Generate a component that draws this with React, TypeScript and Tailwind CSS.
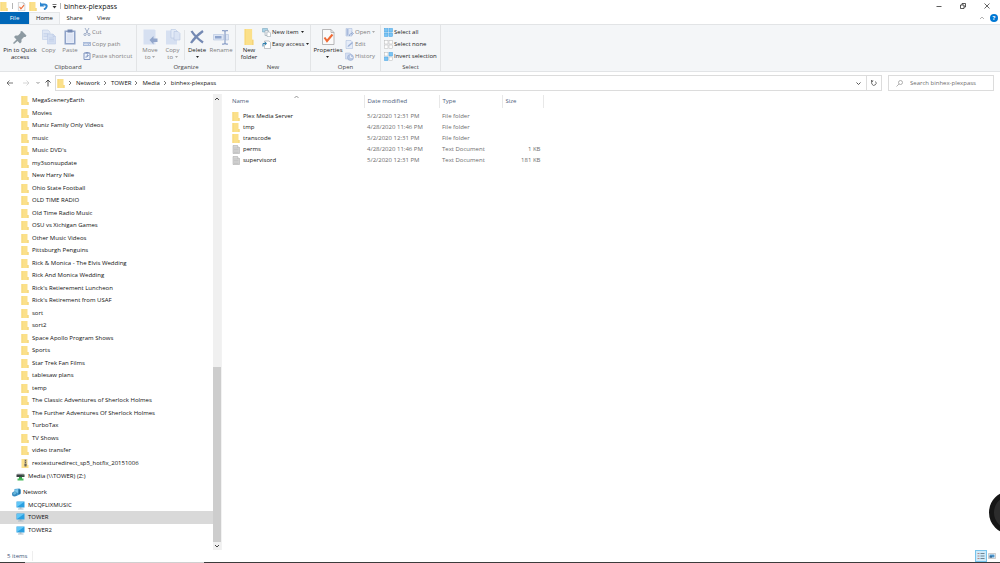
import React from 'react';

type IconProps = { className?: string };

const FolderIcon: React.FC<IconProps> = ({ className = 'h-2 w-2' }) => (
  <svg className={`shrink-0 ${className}`} viewBox="0 0 16 18" preserveAspectRatio="none">
    <path d="M1 0h12v12h2v6H1z" fill="#fbe08a" />
    <path d="M13 12h2v6h-2z" fill="#f3d378" />
    <path d="M1 0h2v18H1z" fill="#f8d878" />
  </svg>
);

const ZipIcon: React.FC<IconProps> = ({ className = 'h-[9px] w-2' }) => (
  <svg className={`shrink-0 ${className}`} viewBox="0 0 16 18" preserveAspectRatio="none">
    <path d="M1 0h12v12h2v6H1z" fill="#fbe08a" />
    <path d="M7 1h4v12H7z" fill="#a89c7c" />
    <path d="M8 2h2v2H8zM8 6h2v2H8zM7 10h4v5H7z" fill="#68645a" />
  </svg>
);

const FileIcon: React.FC<IconProps> = ({ className = 'h-[9px] w-2' }) => (
  <svg className={`shrink-0 ${className}`} viewBox="0 0 16 18">
    <path d="M2 1h9l4 4v12H2z" fill="#d5d5d5" stroke="#a5a5a5" />
    <path d="M4 6h9M4 9h9M4 12h9M4 15h9" stroke="#b4b4b4" />
    <path d="M11 1v4h4" fill="#fff" stroke="#a5a5a5" />
  </svg>
);

const ComputerIcon: React.FC = () => (
  <svg className="h-[9px] w-[9px] shrink-0" viewBox="0 0 18 18">
    <path d="M1 1h16v12H1z" fill="#2a9fe0" />
    <path d="M2 2h14L2 12z" fill="#61c7f7" />
    <path d="M7 13h4v2H7z" fill="#8797a3" />
    <path d="M4 15h11v2H4z" fill="#a9bac6" />
  </svg>
);

const NetworkIcon: React.FC = () => (
  <svg className="h-[9px] w-[9px] shrink-0" viewBox="0 0 18 18">
    <path d="M5 2l10-1 2 2v9l-8 4-4-3z" fill="#3f9ad0" />
    <path d="M6 3l7-1v7l-7 2z" fill="#7cc8ee" />
    <path d="M13 2l4 2v7l-4 2z" fill="#216f9f" />
    <circle cx="5" cy="12" r="5" fill="#3588bd" />
    <path d="M2 10c3-3 5-2 7 0-2 3-4 4-6 3z" fill="#68b8dc" />
  </svg>
);

const DriveIcon: React.FC = () => (
  <svg className="h-[9px] w-[9px] shrink-0" viewBox="0 0 18 18">
    <path d="M3 3h12l2 3H1z" fill="#bfc2c4" />
    <path d="M1 5h16v5H1z" fill="#3b4043" />
    <path d="M13 7h2v1h-2z" fill="#4fe04f" />
    <path d="M6 10h6v4H6z" fill="#34a348" />
    <path d="M3 13h12v4H3z" fill="#45b95a" />
  </svg>
);

const Caret: React.FC<IconProps> = ({ className = 'text-[#222]' }) => (
  <svg className={`inline-block h-[2px] w-[3px] shrink-0 ${className}`} viewBox="0 0 6 4">
    <path d="M0 0h6L3 4z" fill="currentColor" />
  </svg>
);

const PinIcon: React.FC = () => (
  <svg className="h-4 w-4" viewBox="0 0 32 32">
    <path d="M20 4l9 9-2 3-3 0-5 5 0 5-3 3-5-5-7 6-2-2 7-7-5-5 3-3 5 0 5-5 0-3z" fill="#8d9aa2" />
  </svg>
);

const CopyIcon: React.FC = () => (
  <svg className="h-4 w-4" viewBox="0 0 32 32" stroke="#b5c5e2">
    <path d="M3 2h11l4 4v15H3z" fill="#dfe7f5" />
    <path d="M5 9h10M5 12h10M5 15h10" />
    <path d="M13 10h11l5 5v15H13z" fill="#d3def1" />
    <path d="M24 10v5h5M16 18h10M16 21h10M16 24h10" fill="none" />
  </svg>
);

const PasteIcon: React.FC = () => (
  <svg className="h-4 w-4" viewBox="0 0 32 32">
    <path d="M5 3h22v28H5z" fill="#8fa3c8" />
    <path d="M8 6h16v22H8z" fill="#e6ecf8" />
    <path d="M11 1h10v6H11z" fill="#7488b1" />
    <path d="M10 12h12M10 16h12M10 20h12M10 24h12" stroke="#c5d2ea" />
  </svg>
);

const CutIcon: React.FC = () => (
  <svg className="h-2 w-2 shrink-0" viewBox="0 0 16 16" fill="none" stroke="#8b9dbd" strokeWidth="1.6">
    <path d="M4 0l6 11M12 0L6 11" />
    <circle cx="4" cy="13" r="2.2" />
    <circle cx="12" cy="13" r="2.2" />
  </svg>
);

const CopyPathIcon: React.FC = () => (
  <svg className="h-2 w-2 shrink-0" viewBox="0 0 16 16">
    <path d="M0 4h16v8H0z" fill="#a9bbda" />
    <path d="M2 7l2 3 2-3 2 3 2-3M12 9h2" fill="none" stroke="#fff" strokeWidth="1.2" />
  </svg>
);

const PasteShortcutIcon: React.FC = () => (
  <svg className="h-2 w-2 shrink-0" viewBox="0 0 16 16">
    <path d="M2 2h12v13H2z" fill="#eef3fb" stroke="#8095bf" strokeWidth="2" />
    <path d="M5 0h6v3H5z" fill="#8095bf" />
    <path d="M6 12c0-4 1-5 4-5M8 5l3 2-3 3" fill="none" stroke="#6d86b8" strokeWidth="1.4" />
  </svg>
);

const MoveIcon: React.FC = () => (
  <svg className="h-4 w-4" viewBox="0 0 32 32">
    <path d="M3 1h22l2 2v28H3z" fill="#d6e0f1" />
    <path d="M15 22l8-8v5h8v7h-8v5z" fill="#92a6cb" />
  </svg>
);

const CopyToIcon: React.FC = () => (
  <svg className="h-4 w-4" viewBox="0 0 32 32">
    <path d="M2 3h20l2 2v26H2z" fill="#d6e0f1" />
    <path d="M12 1h9l3 3v14H12z" fill="#e4ebf7" stroke="#adbfde" />
    <path d="M18 5h8l4 4v13H18z" fill="#dbe4f4" stroke="#adbfde" />
  </svg>
);

const DeleteIcon: React.FC = () => (
  <svg className="h-4 w-4" viewBox="0 0 32 32">
    <path d="M5 4c5 8 13 16 23 23M28 4C18 11 10 19 4 28" fill="none" stroke="#7489b3" strokeWidth="4.5" />
  </svg>
);

const RenameIcon: React.FC = () => (
  <svg className="h-4 w-4" viewBox="0 0 32 32">
    <path d="M1 11h20v11H1zM25 11h6v11h-6z" fill="#dce5f4" stroke="#a8badb" />
    <path d="M4 14h13v5H4z" fill="#8ea4cd" />
    <path d="M18 3h4l2 2 2-2h4M24 4v25M18 30h4l2-2 2 2h4" fill="none" stroke="#8fa3c9" strokeWidth="2.5" />
  </svg>
);

const PropertiesIcon: React.FC<IconProps> = ({ className = 'h-4 w-4' }) => (
  <svg className={`shrink-0 ${className}`} viewBox="0 0 32 32">
    <path d="M5 1h17l6 6v24H5z" fill="#fafafa" stroke="#a3a3a3" strokeWidth="1.5" />
    <path d="M22 1v6h6" fill="none" stroke="#a3a3a3" strokeWidth="1.5" />
    <path d="M9 17l5 7L25 11" fill="none" stroke="#ee6a35" strokeWidth="4" />
  </svg>
);

const NewItemIcon: React.FC = () => (
  <svg className="h-[9px] w-[9px] shrink-0" viewBox="0 0 18 18">
    <path d="M1 1h10v7H1z" fill="#a9d3e8" stroke="#6f9cb4" />
    <path d="M6 5h7v10H6z" fill="#e9edf0" stroke="#8d9ba5" />
    <path d="M10 8h5l2 2v7h-7z" fill="#fff" stroke="#8d9ba5" />
  </svg>
);

const EasyAccessIcon: React.FC = () => (
  <svg className="h-[9px] w-[9px] shrink-0" viewBox="0 0 18 18">
    <path d="M5 2h9l3 3v12H5z" fill="#fff" stroke="#8a8f94" />
    <path d="M2 13V7h5" fill="none" stroke="#2f7fad" strokeWidth="2" />
    <path d="M6 3l4 4-4 4z" fill="#2f7fad" />
  </svg>
);

const OpenIcon: React.FC = () => (
  <svg className="h-[9px] w-[9px] shrink-0" viewBox="0 0 18 18">
    <path d="M2 1h12v15H2z" fill="#dfe7f5" stroke="#a3b6d8" />
    <path d="M3 2h4v13H3z" fill="#a9bbdc" />
    <path d="M9 16c0-4 2-5 5-5M13 8l4 3-4 3" fill="none" stroke="#7f98c6" strokeWidth="1.5" />
  </svg>
);

const EditIcon: React.FC = () => (
  <svg className="h-[9px] w-[9px] shrink-0" viewBox="0 0 18 18">
    <path d="M2 1h10l3 3v13H2z" fill="#e5ecf8" stroke="#a3b6d8" />
    <path d="M5 14l1-3 8-7 2 2-8 7z" fill="#9eb2d7" />
  </svg>
);

const HistoryIcon: React.FC = () => (
  <svg className="h-[9px] w-[9px] shrink-0" viewBox="0 0 18 18">
    <path d="M1 2h9l3 3v9H1z" fill="#d5dff1" stroke="#a9bbdc" />
    <circle cx="11" cy="11" r="6" fill="#b9c8e3" stroke="#8fa4cd" />
    <path d="M11 7v4h4" fill="none" stroke="#fff" strokeWidth="1.5" />
  </svg>
);

const SelectIcon: React.FC<{ kind: 'all' | 'none' | 'invert' }> = ({ kind }) => {
  const cells = [
    { x: 1, y: 1, on: kind === 'all' },
    { x: 10, y: 1, on: kind !== 'none' },
    { x: 1, y: 10, on: kind !== 'none' },
    { x: 10, y: 10, on: kind === 'all' },
  ];
  return (
    <svg className="h-[9px] w-[9px] shrink-0" viewBox="0 0 18 18">
      {cells.map((c) => (
        <rect
          key={`${c.x}-${c.y}`}
          x={c.x}
          y={c.y}
          width="7"
          height="7"
          fill={c.on ? '#7cc4f3' : '#fdfdfd'}
          stroke={c.on ? '#3fa0e2' : '#b7b7b7'}
        />
      ))}
    </svg>
  );
};

const folders = [
  'MegaSceneryEarth',
  'Movies',
  'Muniz Family Only Videos',
  'music',
  "Music DVD's",
  'my3sonsupdate',
  'New Harry Nile',
  'Ohio State Football',
  'OLD TIME RADIO',
  'Old Time Radio Music',
  'OSU vs Xichigan Games',
  'Other Music Videos',
  'Pittsburgh Penguins',
  'Rick & Monica - The Elvis Wedding',
  'Rick And Monica Wedding',
  "Rick's Retierement Luncheon",
  "Rick's Retirement from USAF",
  'sort',
  'sort2',
  'Space Apollo Program Shows',
  'Sports',
  'Star Trek Fan Films',
  'tablesaw plans',
  'temp',
  'The Classic Adventures of Sherlock Holmes',
  'The Further Adventures Of Sherlock Holmes',
  'TurboTax',
  'TV Shows',
  'video transfer',
];

const files = [
  { name: 'Plex Media Server', date: '5/2/2020 12:31 PM', type: 'File folder', size: '' },
  { name: 'tmp', date: '4/28/2020 11:46 PM', type: 'File folder', size: '' },
  { name: 'transcode', date: '5/2/2020 12:31 PM', type: 'File folder', size: '' },
  { name: 'perms', date: '4/28/2020 11:46 PM', type: 'Text Document', size: '1 KB' },
  { name: 'supervisord', date: '5/2/2020 12:31 PM', type: 'Text Document', size: '181 KB' },
];

const TitleBar: React.FC = () => (
  <header className="flex h-3 items-center justify-between pr-[10px]">
    <div className="flex items-center">
      <FolderIcon className="h-[9px] w-2" />
      <span className="ml-1 h-[6px] w-px bg-[#b5b5b5]" />
      <button aria-label="Properties" className="ml-1">
        <PropertiesIcon className="h-[9px] w-[9px]" />
      </button>
      <button aria-label="New folder" className="ml-[3px]">
        <FolderIcon className="h-[9px] w-2" />
      </button>
      <button aria-label="Undo" className="ml-[3px]">
        <svg className="h-2 w-2" viewBox="0 0 16 16">
          <path d="M3 5h6c6 0 6 6-1 10" fill="none" stroke="#2e86cf" strokeWidth="4" />
          <path d="M0 0v9h9z" fill="#2e86cf" />
        </svg>
      </button>
      <button aria-label="Customize Quick Access Toolbar" className="ml-1">
        <svg className="h-[5px] w-[5px]" viewBox="0 0 10 10">
          <path d="M1 1h8" stroke="#444" strokeWidth="1.5" />
          <path d="M1 4h8L5 9z" fill="#333" />
        </svg>
      </button>
      <span className="ml-[3px] h-[6px] w-px bg-[#b5b5b5]" />
      <h1 className="ml-[3px] text-[7px]">binhex-plexpass</h1>
    </div>
    <div className="flex items-center gap-[18px]">
      <button aria-label="Minimize">
        <svg className="h-[6px] w-[6px]" viewBox="0 0 12 12">
          <path d="M1 7h10" stroke="#333" strokeWidth="1.6" />
        </svg>
      </button>
      <button aria-label="Restore">
        <svg className="h-[6px] w-[6px]" viewBox="0 0 12 12" fill="none" stroke="#222" strokeWidth="1.5">
          <path d="M1 4h7v7H1zM4 4V1h7v7H8" />
        </svg>
      </button>
      <button aria-label="Close">
        <svg className="h-[6px] w-[6px]" viewBox="0 0 12 12" stroke="#222" strokeWidth="1.4">
          <path d="M1 1l10 10M11 1L1 11" />
        </svg>
      </button>
    </div>
  </header>
);

const TabBar: React.FC = () => (
  <nav className="flex h-3 items-stretch text-center">
    <button className="w-[29px] bg-[#0067b8] text-white">File</button>
    <button className="w-[31px] border-x border-t border-[#e4e6e8] bg-[#f4f6f8]">Home</button>
    <button className="w-[29px]">Share</button>
    <button className="w-[29px]">View</button>
    <div className="ml-auto flex items-center gap-[6px] pr-[2px]">
      <button aria-label="Collapse ribbon">
        <svg className="h-1 w-1" viewBox="0 0 8 8" fill="none" stroke="#a0a0a0" strokeWidth="1.6">
          <path d="M0 6l4-4 4 4" />
        </svg>
      </button>
      <button
        aria-label="Help"
        className="flex h-2 w-2 items-center justify-center rounded-full bg-[#0078d4] text-[6px] font-bold leading-[8px] text-white"
      >
        ?
      </button>
    </div>
  </nav>
);

interface BigButtonProps {
  icon: React.ReactNode;
  label: React.ReactNode;
  width: string;
  disabled?: boolean;
}

const BigButton: React.FC<BigButtonProps> = ({ icon, label, width, disabled }) => (
  <button
    disabled={disabled}
    className={`flex shrink-0 flex-col items-center gap-[2px] whitespace-nowrap text-center leading-[7px] ${width} ${
      disabled ? 'text-[#808080]' : 'text-[#222]'
    }`}
  >
    {icon}
    <span>{label}</span>
  </button>
);

interface SmallButtonProps {
  icon: React.ReactNode;
  label: string;
  disabled?: boolean;
  caret?: boolean;
}

const SmallButton: React.FC<SmallButtonProps> = ({ icon, label, disabled, caret }) => (
  <button
    disabled={disabled}
    className={`flex h-3 items-center gap-px whitespace-nowrap ${disabled ? 'text-[#808080]' : 'text-[#222]'}`}
  >
    {icon}
    <span>{label}</span>
    {caret && <Caret className={disabled ? 'ml-px text-[#aaa]' : 'ml-px text-[#222]'} />}
  </button>
);

const Group: React.FC<{ title: string; width: string; children: React.ReactNode }> = ({ title, width, children }) => (
  <section className={`flex shrink-0 flex-col justify-between border-r border-[#e2e4e6] pt-px ${width}`}>
    <div className="flex">{children}</div>
    <h2 className="text-center leading-[8px] text-[#444]">{title}</h2>
  </section>
);

const Ribbon: React.FC = () => (
  <div className="flex h-12 border-y border-[#e2e4e6] bg-[#f4f6f8]">
    <Group title="Clipboard" width="w-[137px]">
      <div className="flex pt-[3px]">
        <BigButton icon={<PinIcon />} label={<>Pin to Quick<br />access</>} width="w-10" />
        <BigButton icon={<CopyIcon />} label="Copy" width="w-[17px]" disabled />
        <BigButton icon={<PasteIcon />} label="Paste" width="w-[26px]" disabled />
      </div>
      <div className="flex flex-col">
        <SmallButton icon={<CutIcon />} label="Cut" disabled />
        <SmallButton icon={<CopyPathIcon />} label="Copy path" disabled />
        <SmallButton icon={<PasteShortcutIcon />} label="Paste shortcut" disabled />
      </div>
    </Group>
    <Group title="Organize" width="w-[99px]">
      <div className="flex pl-[2px] pt-[3px]">
        <BigButton icon={<MoveIcon />} label={<>Move<br />to <Caret className="text-[#aaa]" /></>} width="w-[22px]" disabled />
        <BigButton icon={<CopyToIcon />} label={<>Copy<br />to <Caret className="text-[#aaa]" /></>} width="w-[23px]" disabled />
        <span className="my-px w-px bg-[#e2e4e6]" />
        <BigButton icon={<DeleteIcon />} label={<>Delete<br /><Caret /></>} width="w-6" />
        <BigButton icon={<RenameIcon />} label="Rename" width="w-6" disabled />
      </div>
    </Group>
    <Group title="New" width="w-[75px]">
      <div className="pt-[3px]">
        <BigButton icon={<FolderIcon className="h-4 w-[10px]" />} label={<>New<br />folder</>} width="w-[26px]" />
      </div>
      <div className="flex flex-col">
        <SmallButton icon={<NewItemIcon />} label="New item" caret />
        <SmallButton icon={<EasyAccessIcon />} label="Easy access" caret />
      </div>
    </Group>
    <Group title="Open" width="w-[70px]">
      <div className="pt-[3px]">
        <BigButton icon={<PropertiesIcon />} label={<>Properties<br /><Caret /></>} width="w-[34px]" />
      </div>
      <div className="flex flex-col">
        <SmallButton icon={<OpenIcon />} label="Open" disabled caret />
        <SmallButton icon={<EditIcon />} label="Edit" disabled />
        <SmallButton icon={<HistoryIcon />} label="History" disabled />
      </div>
    </Group>
    <Group title="Select" width="w-[60px]">
      <div className="flex flex-col pl-[3px]">
        <SmallButton icon={<SelectIcon kind="all" />} label="Select all" />
        <SmallButton icon={<SelectIcon kind="none" />} label="Select none" />
        <SmallButton icon={<SelectIcon kind="invert" />} label="Invert selection" />
      </div>
    </Group>
  </div>
);

const crumbs = ['Network', 'TOWER', 'Media', 'binhex-plexpass'];

const AddressBar: React.FC = () => (
  <div className="flex h-[22px] items-center pl-[6px] pr-[6px]">
    <div className="flex w-[49px] items-center text-[#555]">
      <button aria-label="Back">
        <svg className="h-2 w-2" viewBox="0 0 16 16" fill="none" stroke="#555" strokeWidth="1.6">
          <path d="M14 8H2M7 3L2 8l5 5" />
        </svg>
      </button>
      <button aria-label="Forward" className="ml-2">
        <svg className="h-2 w-2" viewBox="0 0 16 16" fill="none" stroke="#ccc" strokeWidth="1.6">
          <path d="M2 8h12M9 3l5 5-5 5" />
        </svg>
      </button>
      <button aria-label="Recent locations" className="ml-[6px]">
        <svg className="h-1 w-1" viewBox="0 0 8 8" fill="none" stroke="#777" strokeWidth="1.6">
          <path d="M1 2l3 3 3-3" />
        </svg>
      </button>
      <button aria-label="Up" className="ml-1">
        <svg className="h-2 w-2" viewBox="0 0 16 16" fill="none" stroke="#444" strokeWidth="1.8">
          <path d="M8 15V2M3 7l5-5 5 5" />
        </svg>
      </button>
    </div>
    <div className="flex h-4 flex-1 items-center border border-[#dcdcdc] pl-px">
      <FolderIcon className="h-[9px] w-2" />
      {crumbs.map((c) => (
        <React.Fragment key={c}>
          <svg className="ml-[3px] mr-1 h-1 w-1" viewBox="0 0 8 8" fill="none" stroke="#555" strokeWidth="1.6">
            <path d="M2 0l4 4-4 4" />
          </svg>
          <a href="#" className="text-[#111]">{c}</a>
        </React.Fragment>
      ))}
      <button aria-label="Previous locations" className="ml-auto mr-[5px]">
        <svg className="h-[5px] w-[5px]" viewBox="0 0 10 10" fill="none" stroke="#444" strokeWidth="1.8">
          <path d="M1 3l4 4 4-4" />
        </svg>
      </button>
      <button aria-label="Refresh" className="flex h-full w-[15px] items-center justify-center border-l border-[#dcdcdc]">
        <svg className="h-[6px] w-[6px]" viewBox="0 0 12 12" fill="none" stroke="#444" strokeWidth="1.5">
          <path d="M9 3a4.500 4.500 0 1 1-5-1M5 0H1v4" />
        </svg>
      </button>
    </div>
    <label className="ml-[6px] flex h-4 w-[106px] items-center border border-[#dcdcdc] pl-[7px]">
      <svg className="h-[7px] w-[7px] shrink-0" viewBox="0 0 14 14" fill="none" stroke="#888" strokeWidth="1.3">
        <circle cx="9" cy="5" r="4" />
        <path d="M6 8l-5 5" />
      </svg>
      <input
        type="text"
        aria-label="Search"
        placeholder="Search binhex-plexpass"
        className="ml-[7px] w-full min-w-0 outline-none placeholder:text-[#6d6d6d]"
      />
    </label>
  </div>
);

const Sidebar: React.FC = () => (
  <aside className="flex w-[221px] shrink-0">
    <div className="min-w-0 flex-1 whitespace-nowrap">
      <ul>
        {folders.map((name) => (
          <li key={name} className="flex items-center gap-[3px] pl-[21px] odd:h-[13px] even:h-3">
            <FolderIcon className="h-[9px] w-2" />
            {name}
          </li>
        ))}
        <li className="flex h-[13px] items-center gap-[3px] pl-[21px]">
          <ZipIcon />
          rextexturedirect_sp5_hotfix_20151006
        </li>
        <li className="flex h-[13px] items-center gap-[3px] pl-4">
          <DriveIcon />
          Media (\\TOWER) (Z:)
        </li>
      </ul>
      <ul className="pt-[3px]">
        <li className="flex h-[13px] items-center gap-[2px] pl-3">
          <NetworkIcon />
          Network
        </li>
        <li className="flex h-3 items-center gap-[3px] pl-4">
          <ComputerIcon />
          MCQFLIXMUSIC
        </li>
        <li className="flex h-[13px] items-center gap-[3px] bg-[#d9d9d9] pl-4">
          <ComputerIcon />
          TOWER
        </li>
        <li className="flex h-3 items-center gap-[3px] pl-4">
          <ComputerIcon />
          TOWER2
        </li>
      </ul>
    </div>
    <div className="flex w-2 flex-col items-center bg-[#f0f0f0]">
      <button aria-label="Scroll up" className="flex h-[10px] items-center">
        <svg className="h-1 w-1" viewBox="0 0 8 8" fill="none" stroke="#444" strokeWidth="2">
          <path d="M0 6l4-4 4 4" />
        </svg>
      </button>
      <div className="mt-auto h-[175px] w-full bg-[#cdcdcd]" />
      <button aria-label="Scroll down" className="flex h-2 items-center">
        <svg className="h-1 w-1" viewBox="0 0 8 8" fill="none" stroke="#444" strokeWidth="2">
          <path d="M0 2l4 4 4-4" />
        </svg>
      </button>
    </div>
  </aside>
);

const FileList: React.FC = () => (
  <main className="min-w-0 flex-1 border-l border-[#f2f2f2] pl-[10px] pt-px">
    <table className="w-[312px] table-fixed border-collapse whitespace-nowrap text-left">
      <thead>
        <tr className="h-[13px] text-[#4d607b]">
          <th className="relative w-[132px] border-r border-[#e8e8e8] font-normal">
            Name
            <svg className="absolute left-[62px] top-0 h-1 w-[5px]" viewBox="0 0 10 8" fill="none" stroke="#777" strokeWidth="1.5">
              <path d="M1 6l4-4 4 4" />
            </svg>
          </th>
          <th className="w-[75px] border-r border-[#e8e8e8] pl-[3px] font-normal">Date modified</th>
          <th className="w-[63px] border-r border-[#e8e8e8] pl-[3px] font-normal">Type</th>
          <th className="border-r border-[#e8e8e8] pl-[3px] font-normal">Size</th>
        </tr>
      </thead>
      <tbody>
        <tr className="h-[3px]" />
        {files.map((f) => (
          <tr key={f.name} className="h-[11px] text-[#6d6d6d]">
            <td className="text-[#111]">
              <div className="flex items-center gap-[3px]">
                {f.type === 'File folder' ? <FolderIcon className="h-[9px] w-2" /> : <FileIcon />}
                {f.name}
              </div>
            </td>
            <td className="pl-[3px]">{f.date}</td>
            <td className="pl-[3px]">{f.type}</td>
            <td className="pr-[3px] text-right">{f.size}</td>
          </tr>
        ))}
      </tbody>
    </table>
  </main>
);

const StatusBar: React.FC = () => (
  <footer className="flex h-3 items-center justify-between pl-[7px] pr-1">
    <span className="border-r border-[#eee] pr-[5px] pt-px text-[#3d5578]">5 items</span>
    <div className="flex items-center gap-px">
      <button aria-label="Details view" className="flex h-3 w-3 items-center justify-center border border-[#78c4ec] bg-[#cfeaf9]">
        <svg className="h-2 w-2" viewBox="0 0 16 16" strokeWidth="2">
          <path d="M1 3h4M1 8h4M1 13h4" stroke="#b58a86" />
          <path d="M7 3h8M7 8h8M7 13h8" stroke="#6f8593" />
        </svg>
      </button>
      <button aria-label="Large icons view">
        <svg className="h-[6px] w-2" viewBox="0 0 16 12">
          <path d="M1 1h14v10H1z" fill="#fff" stroke="#999" />
          <path d="M3 3h10v6H3z" fill="#4b93c9" />
          <path d="M3 7h5v2H3z" fill="#274b70" />
        </svg>
      </button>
    </div>
  </footer>
);

const App: React.FC = () => (
  <div className="relative flex min-h-screen flex-col overflow-hidden bg-white font-['Open_Sans',sans-serif] text-[6px] leading-[9px] text-[#111]">
    <TitleBar />
    <TabBar />
    <Ribbon />
    <AddressBar />
    <div className="flex flex-1">
      <Sidebar />
      <FileList />
    </div>
    <StatusBar />
    <div className="flex h-px bg-[#3c3c3c]">
      <span className="ml-[25px] w-[179px] bg-[#d0d0d0]" />
    </div>
    <div className="absolute -right-8 bottom-[29px] h-[43px] w-[43px] rounded-full border-[5px] border-[#161616] bg-[#2c2c2c]" />
  </div>
);

export default App;
